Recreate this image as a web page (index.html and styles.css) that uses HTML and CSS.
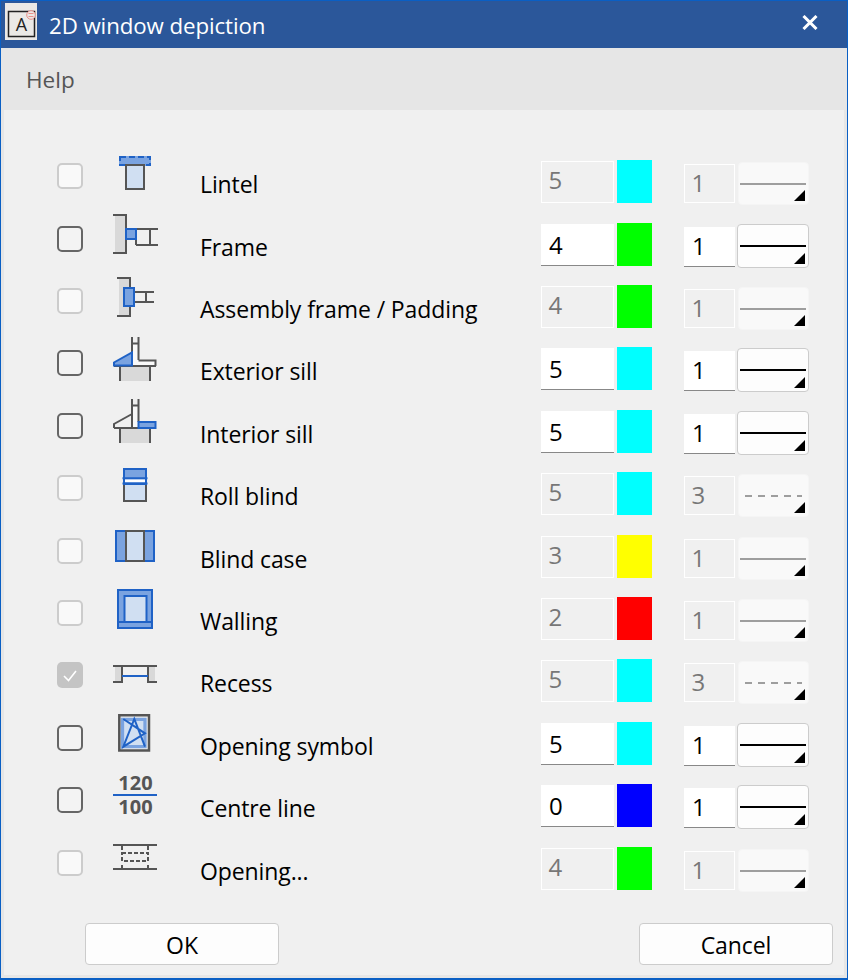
FILE: index.html
```html
<!DOCTYPE html>
<html lang="en">
<head>
<meta charset="utf-8">
<title>2D window depiction</title>
<link rel="stylesheet" href="styles.css">
</head>
<body>
<div class="window">
  <header class="titlebar">
    <svg class="appicon" viewBox="0 0 32 37" width="32" height="37" aria-hidden="true">
      <rect width="32" height="37" fill="#ebe9e6"/>
      <path class="appicon-frame" d="M3.500 8.500h26v25h-26z"/>
      <text class="appicon-letter" x="16.500" y="27.500" text-anchor="middle">A</text>
      <circle class="appicon-badge" cx="26" cy="12" r="4.300"/>
      <path class="appicon-lines" d="M23.500 10.500h5M23.500 13.500h5"/>
    </svg>
    <h1 class="title">2D window depiction</h1>
    <svg class="close" viewBox="0 0 16 15" width="16" height="15" aria-hidden="true"><path d="M1.500 1l13 13M14.500 1l-13 13"/></svg>
  </header>
  <nav class="menubar"><span class="menu-item">Help</span></nav>
  <main class="panel">
    <div class="rows">

      <div class="row off">
        <span class="check"></span>
        <svg class="icon" viewBox="110 148 50 64"><path class="lintel" d="M120 157h30v8h-30z"/><path class="blue-dash" d="M120 157h30v8h-30z"/><path class="pale gray" d="M126 165h18v24h-18z"/></svg>
        <span class="label">Lintel</span>
        <span class="num">5</span><span class="swatch cyan"></span><span class="num small">1</span><span class="linebtn"><span class="line"></span></span>
      </div>

      <div class="row">
        <span class="check"></span>
        <svg class="icon" viewBox="110 211 50 64"><path class="wall" d="M115 215h11v38h-11z"/><path class="gray" d="M113 215h13v38h-13M136 239v6M136 229h22M136 245h22M150 229v16"/><path class="mid blue" d="M126 229h10v10h-10z"/></svg>
        <span class="label">Frame</span>
        <span class="num">4</span><span class="swatch green"></span><span class="num small">1</span><span class="linebtn"><span class="line"></span></span>
      </div>

      <div class="row off">
        <span class="check"></span>
        <svg class="icon" viewBox="110 273 50 64"><path class="wall" d="M119 278h10v38h-10z"/><path class="gray" d="M117 278h13v38h-13M134 292h20M134 302h20M146 292v10"/><path class="mid blue" d="M124 288h10v18h-10z"/></svg>
        <span class="label">Assembly frame / Padding</span>
        <span class="num">4</span><span class="swatch green"></span><span class="num small">1</span><span class="linebtn"><span class="line"></span></span>
      </div>

      <div class="row">
        <span class="check"></span>
        <svg class="icon" viewBox="110 335 50 64"><path class="wall" d="M120 366h30v15h-30z"/><path class="sill-fill" d="M132 344h6.500v16h17v6h-23.500z"/><path class="gray" d="M132 337v29M138.500 337v23M132 343.500h6.500M120 366v15M150 366v15M114 366h42M138.500 360.500h17v5.500"/><path class="mid blue" d="M132 352.500v13h-18v-3z"/></svg>
        <span class="label">Exterior sill</span>
        <span class="num">5</span><span class="swatch cyan"></span><span class="num small">1</span><span class="linebtn"><span class="line"></span></span>
      </div>

      <div class="row">
        <span class="check"></span>
        <svg class="icon" viewBox="110 398 50 64"><path class="wall" d="M120 428h30v15h-30z"/><path class="sill-fill" d="M132 406h6.500v22h-6.500z"/><path class="gray" d="M132 399v29M138.500 399v23M132 405.500h6.500M120 428v15M150 428v15M114 428h24M132 414l-18 10v4"/><path class="mid blue" d="M138.500 422h17v6h-17z"/></svg>
        <span class="label">Interior sill</span>
        <span class="num">5</span><span class="swatch cyan"></span><span class="num small">1</span><span class="linebtn"><span class="line"></span></span>
      </div>

      <div class="row off">
        <span class="check"></span>
        <svg class="icon" viewBox="110 460 50 64"><path class="pale gray" d="M124 484h22v17h-22z"/><path class="mid blue" d="M124 469h22v15h-22z"/><path class="white-strip" d="M125 480.700h20"/><path class="blue-line" d="M122.500 478.300h25M122.500 483.500h25"/></svg>
        <span class="label">Roll blind</span>
        <span class="num">5</span><span class="swatch cyan"></span><span class="num small">3</span><span class="linebtn"><span class="line dashed"></span></span>
      </div>

      <div class="row off">
        <span class="check"></span>
        <svg class="icon" viewBox="110 523 50 64"><path class="mid blue" d="M116 531h38v30h-38z"/><path class="pale gray" d="M126 531h18v30h-18z"/></svg>
        <span class="label">Blind case</span>
        <span class="num">3</span><span class="swatch yellow"></span><span class="num small">1</span><span class="linebtn"><span class="line"></span></span>
      </div>

      <div class="row off">
        <span class="check"></span>
        <svg class="icon" viewBox="110 585 50 64"><path class="mid blue" d="M118 590h34v38h-34z"/><path class="pale blue" d="M124.500 596h22v26h-22z"/><path class="blue-line" d="M118 622h34"/></svg>
        <span class="label">Walling</span>
        <span class="num">2</span><span class="swatch red"></span><span class="num small">1</span><span class="linebtn"><span class="line"></span></span>
      </div>

      <div class="row off">
        <span class="check checked"><svg viewBox="0 0 26 26" width="26" height="26"><path d="M7 14l4.500 4.500L19 9"/></svg></span>
        <svg class="icon" viewBox="110 647 50 64"><path class="wall" d="M115 667h7v15h-7zM148 667h7v15h-7z"/><path class="gray" d="M113 666h44M122 666v16h-9M148 666v16h9"/><path class="blue-line" d="M122 676h26"/></svg>
        <span class="label">Recess</span>
        <span class="num">5</span><span class="swatch cyan"></span><span class="num small">3</span><span class="linebtn"><span class="line dashed"></span></span>
      </div>

      <div class="row">
        <span class="check"></span>
        <svg class="icon" viewBox="110 710 50 64"><path class="sym-fill" d="M122.500 719.300h22.500v27.400h-22.500z"/><path class="gray sym-frame" d="M119.300 715.300h29.700v35.200h-29.700z"/><path class="blue-line" d="M123.300 719L145 733.300 123.300 746.700 134.300 719 145 746.700"/></svg>
        <span class="label">Opening symbol</span>
        <span class="num">5</span><span class="swatch cyan"></span><span class="num small">1</span><span class="linebtn"><span class="line"></span></span>
      </div>

      <div class="row">
        <span class="check"></span>
        <svg class="icon" viewBox="110 772 50 64"><text class="frac" x="135.500" y="790" text-anchor="middle">120</text><path class="blue-line" d="M113 795h44"/><text class="frac" x="135.500" y="814" text-anchor="middle">100</text></svg>
        <span class="label">Centre line</span>
        <span class="num">0</span><span class="swatch blue-swatch"></span><span class="num small">1</span><span class="linebtn"><span class="line"></span></span>
      </div>

      <div class="row off">
        <span class="check"></span>
        <svg class="icon" viewBox="110 835 50 64"><path class="gray" d="M113 845h44M113 869h44M122 846v4M148 846v4M122 865v3M148 865v3"/><path class="gray dash" d="M122 853h26v8h-26z"/></svg>
        <span class="label">Opening...</span>
        <span class="num">4</span><span class="swatch green"></span><span class="num small">1</span><span class="linebtn"><span class="line"></span></span>
      </div>

    </div>
    <footer class="actions">
      <button class="btn" type="button">OK</button>
      <button class="btn" type="button">Cancel</button>
    </footer>
  </main>
</div>
</body>
</html>
```
FILE: styles.css
```css
* { box-sizing: border-box; }
html, body { margin: 0; padding: 0; }
body { width: 848px; height: 980px; overflow: hidden; font-family: "Open Sans", "Noto Sans", sans-serif; }

.window {
  width: 848px;
  height: 980px;
  display: flex;
  flex-direction: column;
  border: 1px solid #0a5fc4;
  border-bottom-width: 2px;
  background: #e6e6e6;
}

.titlebar {
  height: 47px;
  flex: none;
  display: flex;
  align-items: flex-start;
  background: #2b579a;
  color: #fff;
}
.appicon { margin: 2px 0 0 4px; flex: none; }
.appicon-frame { fill: none; stroke: #222; stroke-width: 1.5; }
.appicon-letter { font: 18px "Open Sans", sans-serif; fill: #222; }
.appicon-badge { fill: #ebe9e6; stroke: #e8908a; stroke-width: 1; }
.appicon-lines { fill: none; stroke: #e8908a; stroke-width: 1; }
.title { margin: 9px 0 0 12px; font-size: 22.3px; line-height: 32px; font-weight: 400; letter-spacing: -0.1px; }
.close { margin: 14px 29px 0 auto; }
.close path { stroke: #fff; stroke-width: 3; fill: none; }

.menubar { height: 62px; flex: none; padding: 16px 0 0 25px; background: #e6e6e6; }
.menu-item { font-size: 22.5px; line-height: 32px; color: #555; }

.panel {
  flex: 1;
  margin: 0 3px 3px;
  background: #f0f0f0;
  display: flex;
  flex-direction: column;
}
.rows { margin-top: 50.1px; }
.row {
  height: 62.42px;
  display: flex;
  align-items: flex-start;
  padding-left: 53px;
  color: #000;
}

.check {
  flex: none;
  width: 26px;
  height: 26px;
  margin-top: 3px;
  border: 2px solid #666;
  border-radius: 5px;
  background: #f3f3f3;
}
.off .check { border-color: #ccc; background: #f9f9f9; }
.off .check.checked { border: 0; background: #c4c4c4; }
.check svg { display: block; }
.check path { fill: none; stroke: #fff; stroke-width: 1.6; }

.icon { flex: none; width: 50px; height: 64px; margin: -12px 0 0 27px; display: block; overflow: visible; }
.icon path { fill: none; stroke-width: 2; }
.icon .gray { stroke: #555; }
.icon .blue { stroke: #1f62c6; }
.icon .wall { fill: #d9d9d9; stroke: none; }
.icon .sill-fill { fill: #f9f9f9; stroke: none; }
.icon .mid { fill: #7aa3e0; }
.icon .pale { fill: #d0dff2; }
.icon .lintel { fill: #7aa3e0; stroke: #7aa3e0; }
.icon .blue-dash { stroke: #1f62c6; stroke-dasharray: 6 3; }
.icon .blue-line { stroke: #1f62c6; }
.icon .white-strip { stroke: #fff; stroke-width: 3; }
.icon .sym-fill { fill: #d0dff2; stroke: #7aa3e0; stroke-width: 3.3; }
.icon .sym-frame { stroke-width: 2.5; }
.icon .dash { stroke-dasharray: 4 2; }
.frac { font: 700 20px "Noto Sans", sans-serif; fill: #555; }

.label {
  flex: none;
  width: 341px;
  margin: 8px 0 0 40px;
  font-size: 23px;
  line-height: 32px;
  letter-spacing: -0.1px;
  white-space: nowrap;
}

.num {
  flex: none;
  width: 73px;
  height: 42px;
  margin-top: 1px;
  padding-left: 8px;
  font-size: 24px;
  line-height: 41px;
  background: #fff;
  border-bottom: 1.5px solid #888;
}
.off .num { background: #f0f0f0; border: 1.5px solid #fff; color: #777; padding-left: 6.5px; line-height: 36px; }
.num.small { width: 51px; height: 40px; margin: 4px 0 0 32px; line-height: 37px; }
.off .num.small { height: 39px; padding-left: 6.5px; line-height: 36px; }

.swatch { flex: none; width: 35px; height: 43px; margin-left: 3px; }
.cyan { background: #0ff; }
.green { background: #0f0; }
.yellow { background: #ff0; }
.red { background: #f00; }
.blue-swatch { background: #00f; }

.linebtn {
  position: relative;
  flex: none;
  width: 72px;
  height: 44px;
  margin: 1px 0 0 2px;
  padding-top: 20px;
  background: #fdfdfd;
  border: 1px solid #ccc;
  border-radius: 4px;
}
.off .linebtn { height: 43px; margin: 2px 0 0 3px; width: 71px; padding-top: 20px; background: #f9f9f9; border-color: #f5f5f5; }
.line { display: block; height: 2px; margin: 0 2px; background: #000; }
.off .line { margin: 0 2px 0 1px; background: #9e9e9e; }
.off .line.dashed { margin: 0 6px; height: 2px; background: repeating-linear-gradient(90deg, #9e9e9e 0 7px, transparent 7px 13px); }
.linebtn::after {
  content: "";
  position: absolute;
  right: 3px;
  bottom: 3px;
  border-style: solid;
  border-width: 0 0 11px 11px;
  border-color: transparent transparent #000 transparent;
}

.actions { display: flex; justify-content: space-between; margin-top: 14px; padding: 0 11px 0 81px; }
.btn {
  width: 194px;
  height: 42px;
  padding: 2px 0 0;
  background: #fdfdfd;
  border: 1px solid #ccc;
  border-radius: 4px;
  font: 23px "Open Sans", sans-serif;
  letter-spacing: -0.1px;
  color: #000;
}
```
